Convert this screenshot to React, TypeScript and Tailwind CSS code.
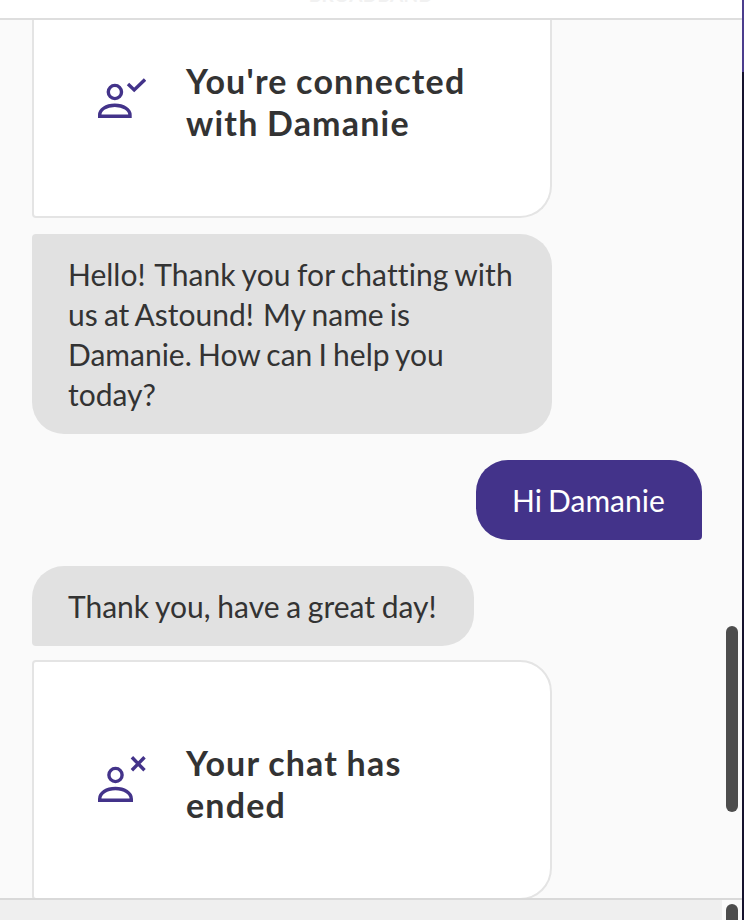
import type { ReactNode } from "react";

function AgentJoinedIcon() {
  return (
    <svg width="50" height="44" viewBox="0 0 50 44" fill="none" stroke="#43338a" strokeWidth="3.4" className="shrink-0">
      <circle cx="18.9" cy="16" r="6.6" />
      <path d="M3.7 40.3V39C3.7 33.5 10 29.3 18.8 29.3S34 33.5 34 39v1.3Z" />
      <path d="M32 8l6.2 6L49 3.5" />
    </svg>
  );
}

function ChatEndedIcon() {
  return (
    <svg width="50" height="48" viewBox="0 0 50 48" fill="none" stroke="#43338a" strokeWidth="3.4" className="shrink-0">
      <circle cx="19.5" cy="20" r="6.6" />
      <path d="M3.7 45.2V44C3.7 38 10.5 33.5 19.4 33.5S35.3 38 35.3 44v1.2Z" />
      <path d="M35.9 2.3l12.6 13M48.5 2.3l-12.6 13" />
    </svg>
  );
}

function AgentBubble({ children, className }: { children: ReactNode; className: string }) {
  return (
    <div className={`bg-[#e1e1e1] px-9 py-5 text-[30px] leading-10 whitespace-nowrap text-[#333333] [font-variant-ligatures:none] ${className}`}>
      {children}
    </div>
  );
}

export default function App() {
  return (
    <div className="flex h-[920px] w-[744px] overflow-hidden font-['Lato',sans-serif]">
      <div className="flex min-w-0 flex-1 flex-col">
        <header className="flex h-5 shrink-0 items-start justify-center overflow-hidden border-b-2 border-[#dedede] bg-white">
          <span className="-mt-[17px] text-[19px] leading-6 font-bold tracking-[0.3px] text-[#f1f1f1]">BROADBAND</span>
        </header>
        <main className="relative flex h-[878px] shrink-0 flex-col items-start overflow-hidden bg-[#fafafa] pr-10 pl-8">
          <section className="flex h-[198px] w-[520px] shrink-0 items-start rounded-b-[32px] rounded-bl-[4px] border-2 border-t-0 border-[#e4e4e4] bg-white pt-10 pl-[62px]">
            <div className="mt-4">
              <AgentJoinedIcon />
            </div>
            <h2 className="ml-10 text-[34px] leading-[42px] font-bold tracking-[1.2px] text-[#333333] [word-spacing:-1px]">
              You're connected
              <br />
              with Damanie
            </h2>
          </section>
          <AgentBubble className="mt-4 w-[520px] rounded-[32px] rounded-tl-[4px] [word-spacing:-1.5px]">
            Hello<span className="mr-[3.5px]">!</span> Thank <span className="tracking-[0.1px]">you for chatting with</span>
            <br />
            us at Astound<span className="mr-[3px]">!</span> My name is
            <br />
            Damanie. How can I help you
            <br />
            today?
          </AgentBubble>
          <div className="mt-[26px] h-20 w-[226px] self-end rounded-[32px] rounded-br-[4px] bg-[#43338a] px-9 py-5 text-[30px] leading-10 whitespace-nowrap text-white [word-spacing:-1.5px]">
            Hi Damanie
          </div>
          <AgentBubble className="mt-[26px] w-[442px] rounded-[32px] rounded-bl-[4px] [word-spacing:-1px]">
            Thank you, have a great day!
          </AgentBubble>
          <section className="mt-[14px] flex h-[240px] w-[520px] shrink-0 items-start rounded-[32px] rounded-l-[4px] border-2 border-[#e4e4e4] bg-white pt-20 pl-[62px]">
            <div className="mt-[13px]">
              <ChatEndedIcon />
            </div>
            <h2 className="ml-10 text-[34px] leading-[42px] font-bold tracking-[1.2px] text-[#333333] [word-spacing:-1px]">
              Your chat has
              <br />
              ended
            </h2>
          </section>
          <div className="absolute top-[606px] right-1 h-[186px] w-3 rounded-full bg-[#4d4d4d]" />
        </main>
        <footer className="flex h-[22px] shrink-0 justify-between overflow-hidden border-t-2 border-[#d9d9d9] bg-[#efefef]">
          <div />
          <div className="h-full w-5 bg-[#fafafa] pt-1 pl-1">
            <div className="h-10 w-3 rounded-full bg-[#4d4d4d]" />
          </div>
        </footer>
      </div>
      <div className="flex w-0.5 flex-col bg-[#15122d]">
        <div className="h-[72px] bg-[#4b3d8d]" />
      </div>
    </div>
  );
}
